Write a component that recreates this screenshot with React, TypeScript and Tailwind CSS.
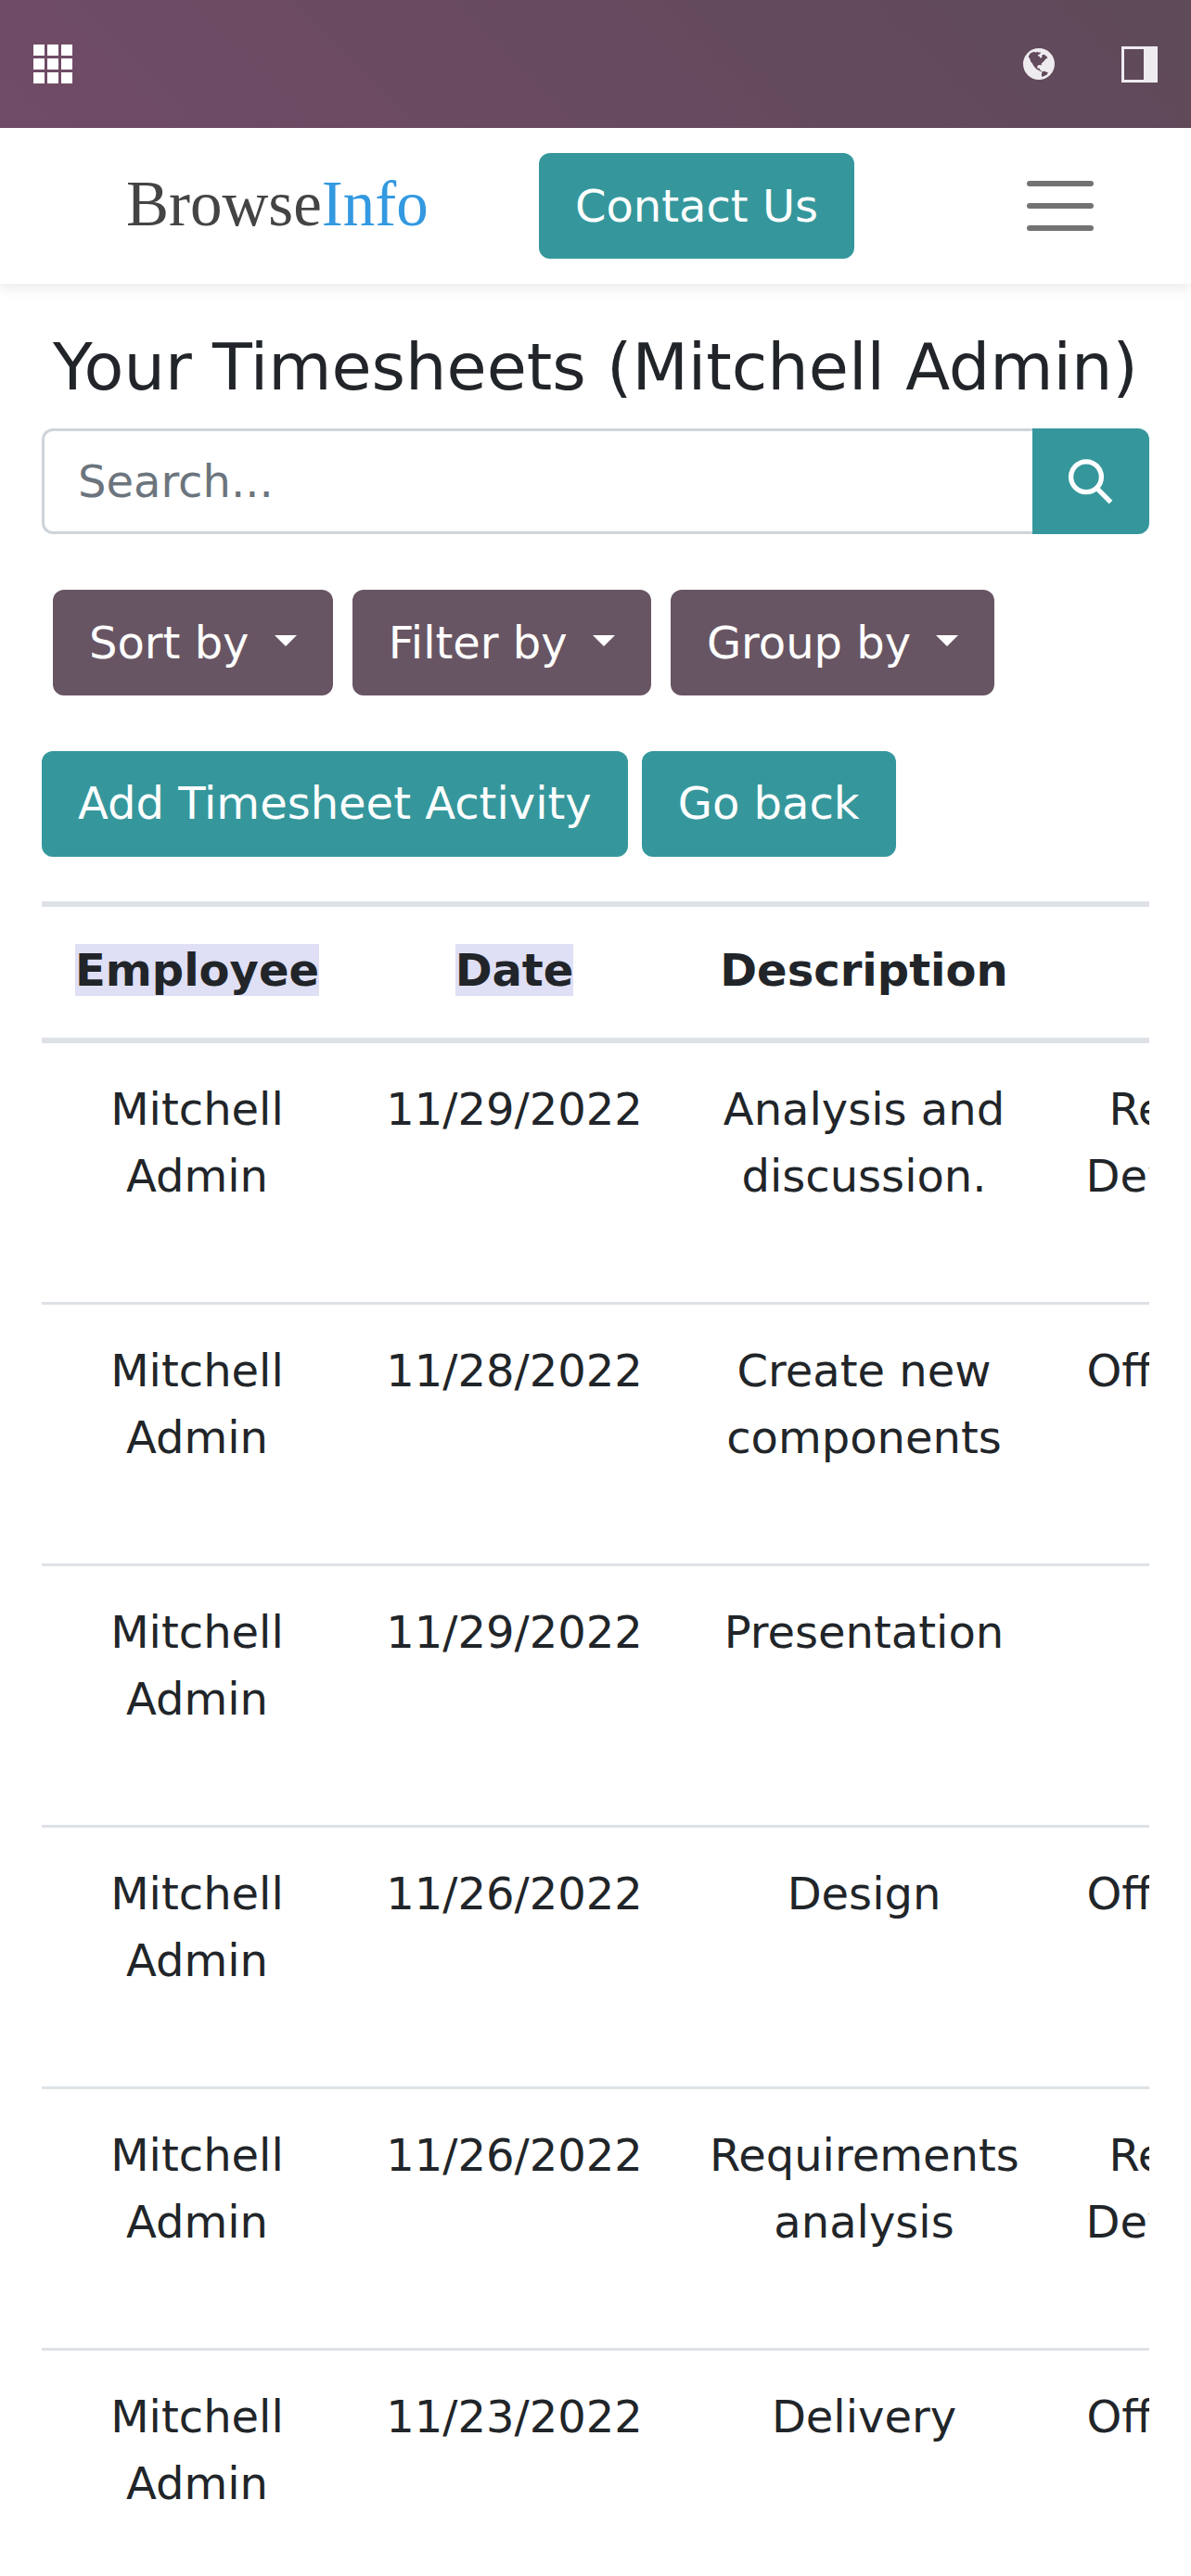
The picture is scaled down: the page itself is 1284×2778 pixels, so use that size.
import React from "react";

const rows: { date: string; description: string; project: string }[] = [
  { date: "11/29/2022", description: "Analysis and discussion.", project: "Research & Development" },
  { date: "11/28/2022", description: "Create new components", project: "Office Design" },
  { date: "11/29/2022", description: "Presentation", project: "" },
  { date: "11/26/2022", description: "Design", project: "Office Design" },
  { date: "11/26/2022", description: "Requirements analysis", project: "Research & Development" },
  { date: "11/23/2022", description: "Delivery", project: "Office Design" },
];

function Globe() {
  return (
    <svg className="h-[34px] w-[34px]" viewBox="0 0 34 34" fill="none">
      <circle cx="17" cy="17" r="17" fill="#efecf0" />
      <path
        fill="#614a5b"
        d="M5.7 9 L7.7 5.6 L10 4.6 L12 3.7 L13.6 4.8 L15 3.7 L16.5 4.6 L19 4.5 L18.5 6 L16 7.3 L16.3 8.6 L17.9 9 L18.5 10.7 L20.3 9.7 L20.5 7.2 L22 6.7 L23.9 7.5 L26.6 10.3 L25 11.2 L24 12 L22.5 14 L20 16.3 L19.5 18.8 L18.6 18 L16.3 18.3 L15 20 L15.8 21.7 L17.5 21.4 L18 23.2 L19.7 24.3 L20.5 25.2 L18.5 24.8 L14.3 22.6 L11.3 19 L9.7 16 L8.2 14.5 L7.3 11.5 Z M20.5 25.3 L22.8 24.7 L26.9 26.3 L25.5 28.8 L22.5 30 L20.3 31 L19.8 29 Z"
      />
    </svg>
  );
}

function Dropdown({ label }: { label: string }) {
  return (
    <button className="flex h-[114px] items-center rounded-xl bg-[#685563] px-[39px] text-white">
      <span>{label}</span>
      <span className="mb-1 ml-[27.2px] border-x-12 border-t-12 border-x-transparent border-t-white" />
    </button>
  );
}

export default function App() {
  return (
    <div className="h-[2778px] w-[1284px] overflow-hidden bg-white font-['DejaVu_Sans',sans-serif] text-[48px] leading-[72px] text-[#212529]">
      <header className="flex h-[138px] items-center bg-[linear-gradient(45deg,#714B67,#5e4a59)] px-9">
        <div className="grid grid-cols-3 gap-[3px]">
          {Array.from({ length: 9 }, (_, i) => (
            <span key={i} className="h-3 w-3 bg-white" />
          ))}
        </div>
        <div className="ml-auto mr-[72px]">
          <Globe />
        </div>
        <div className="h-[39px] w-[39px] border-3 border-r-15 border-[#efecf0]" />
      </header>

      <nav className="flex h-[168px] items-center bg-white shadow-[0_6px_12px_rgba(0,0,0,0.075)]">
        <div className="ml-[136px] w-[445px] pb-1 font-['Liberation_Serif',serif] text-[69px] text-[#444444]">
          Browse<span className="text-[#3399e0]">Info</span>
        </div>
        <button className="h-[114px] w-[340px] rounded-xl bg-[#35979c] text-white">Contact Us</button>
        <div className="ml-[186px] flex w-[72px] flex-col gap-[18px]">
          <span className="h-1.5 rounded-[3px] bg-[#737373]" />
          <span className="h-1.5 rounded-[3px] bg-[#737373]" />
          <span className="h-1.5 rounded-[3px] bg-[#737373]" />
        </div>
      </nav>

      <main className="px-[45px] pt-[48px]">
        <h1 className="-mx-4 h-[84px] text-center text-[70.1px] leading-[84px] whitespace-nowrap">
          Your Timesheets (Mitchell Admin)
        </h1>

        <div className="mt-6 flex h-[114px]">
          <input
            className="min-w-0 flex-1 rounded-l-xl border-3 border-r-0 border-[#ced4da] px-9 placeholder:text-[#6c757d] placeholder:opacity-100"
            placeholder="Search..."
          />
          <button className="flex w-[126px] items-center justify-center rounded-r-xl bg-[#35979c]">
            <svg className="h-12 w-12" viewBox="0 0 48 48" fill="none" stroke="white" strokeWidth="5.3">
              <circle cx="19" cy="19.3" r="16.4" />
              <path d="M31 32 L45.5 46.5" />
            </svg>
          </button>
        </div>

        <div className="mt-[60px] flex gap-[21px] pl-3">
          <Dropdown label="Sort by" />
          <Dropdown label="Filter by" />
          <Dropdown label="Group by" />
        </div>

        <div className="mt-[60px] flex gap-[15px] text-white">
          <button className="h-[114px] rounded-xl bg-[#35979c] px-[39px] pb-0.5">Add Timesheet Activity</button>
          <button className="h-[114px] rounded-xl bg-[#35979c] px-[39px] pb-0.5">Go back</button>
        </div>

        <div className="mt-12 overflow-hidden">
          <table className="w-[1485px] table-fixed border-separate border-spacing-0 text-center">
            <colgroup>
              <col className="w-[335px]" />
              <col className="w-[349px]" />
              <col className="w-[405px]" />
              <col className="w-[396px]" />
            </colgroup>
            <thead>
              <tr className="[&>th]:h-[153px] [&>th]:border-y-6 [&>th]:border-[#dee2e6] [&>th]:p-0 [&>th]:pb-[5px] [&>th]:text-center [&>th]:align-middle [&>th]:font-bold">
                <th><span className="bg-[#dfdff5]">Employee</span></th>
                <th><span className="bg-[#dfdff5]">Date</span></th>
                <th>Description</th>
                <th />
              </tr>
            </thead>
            <tbody>
              {rows.map((row, i) => (
                <tr
                  key={i}
                  className="[&>td]:h-[282px] [&>td]:border-b-3 [&>td]:border-[#dee2e6] [&>td]:px-9 [&>td]:pt-[34.5px] [&>td]:align-top"
                >
                  <td>Mitchell Admin</td>
                  <td className="whitespace-nowrap">{row.date}</td>
                  <td>{row.description}</td>
                  <td>{row.project}</td>
                </tr>
              ))}
            </tbody>
          </table>
        </div>
      </main>
    </div>
  );
}
